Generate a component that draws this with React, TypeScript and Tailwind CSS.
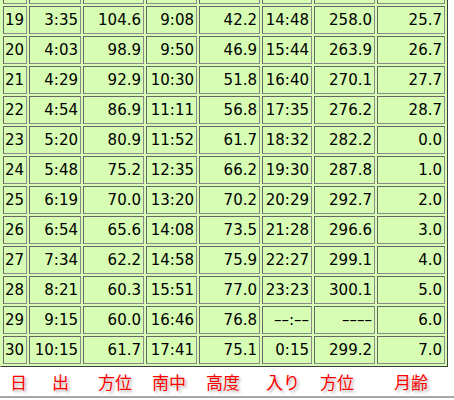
import React from "react";

const rows: string[][] = [
  ["", "", "", "", "", "", "", ""],
  ["19", "3:35", "104.6", "9:08", "42.2", "14:48", "258.0", "25.7"],
  ["20", "4:03", "98.9", "9:50", "46.9", "15:44", "263.9", "26.7"],
  ["21", "4:29", "92.9", "10:30", "51.8", "16:40", "270.1", "27.7"],
  ["22", "4:54", "86.9", "11:11", "56.8", "17:35", "276.2", "28.7"],
  ["23", "5:20", "80.9", "11:52", "61.7", "18:32", "282.2", "0.0"],
  ["24", "5:48", "75.2", "12:35", "66.2", "19:30", "287.8", "1.0"],
  ["25", "6:19", "70.0", "13:20", "70.2", "20:29", "292.7", "2.0"],
  ["26", "6:54", "65.6", "14:08", "73.5", "21:28", "296.6", "3.0"],
  ["27", "7:34", "62.2", "14:58", "75.9", "22:27", "299.1", "4.0"],
  ["28", "8:21", "60.3", "15:51", "77.0", "23:23", "300.1", "5.0"],
  ["29", "9:15", "60.0", "16:46", "76.8", "––:––", "––––", "6.0"],
  ["30", "10:15", "61.7", "17:41", "75.1", "0:15", "299.2", "7.0"],
];

const labels: { t: string; w: string }[] = [
  { t: "日", w: "w-[42px]" },
  { t: "出", w: "w-[46px]" },
  { t: "方位", w: "w-[54px]" },
  { t: "南中", w: "w-[54px]" },
  { t: "高度", w: "w-[60px]" },
  { t: "入り", w: "w-[54px]" },
  { t: "方位", w: "w-[74px]" },
  { t: "月齢", w: "w-[50px]" },
];

export default function App() {
  return (
    <div className="w-[454px] h-[400px] overflow-hidden bg-white">
      <div className="-mt-[27px] w-[448px] bg-[#d6fdb3] border border-l-[#d6fdb3] border-t-[#d6fdb3] border-r-[#3c3c3c] border-b-[#3c3c3c] p-[2px] grid grid-cols-[24px_52px_61px_51px_61px_50px_61px_68px] gap-[2px] font-['DejaVu_Sans',sans-serif] text-[15px] text-black">
        {rows.map((r, i) =>
          r.map((c, j) => (
            <div
              key={i + "-" + j}
              className="h-[28px] border border-t-[#666] border-l-[#666] border-r-[#8a8a8a] border-b-[#8a8a8a] flex items-center justify-end pr-[2px] leading-none"
            >
              {c}
            </div>
          ))
        )}
      </div>
      <div className="h-[31px] pl-[10px] flex items-center border-b-2 border-[#a8a8a8] font-['Noto_Sans_CJK_JP',sans-serif] text-[17px] text-[#ff0000] [text-shadow:2px_2px_3px_#b0b0b0] leading-none">
        {labels.map((l, i) => (
          <span key={i} className={l.w + " shrink-0"}>
            {l.t}
          </span>
        ))}
      </div>
    </div>
  );
}
